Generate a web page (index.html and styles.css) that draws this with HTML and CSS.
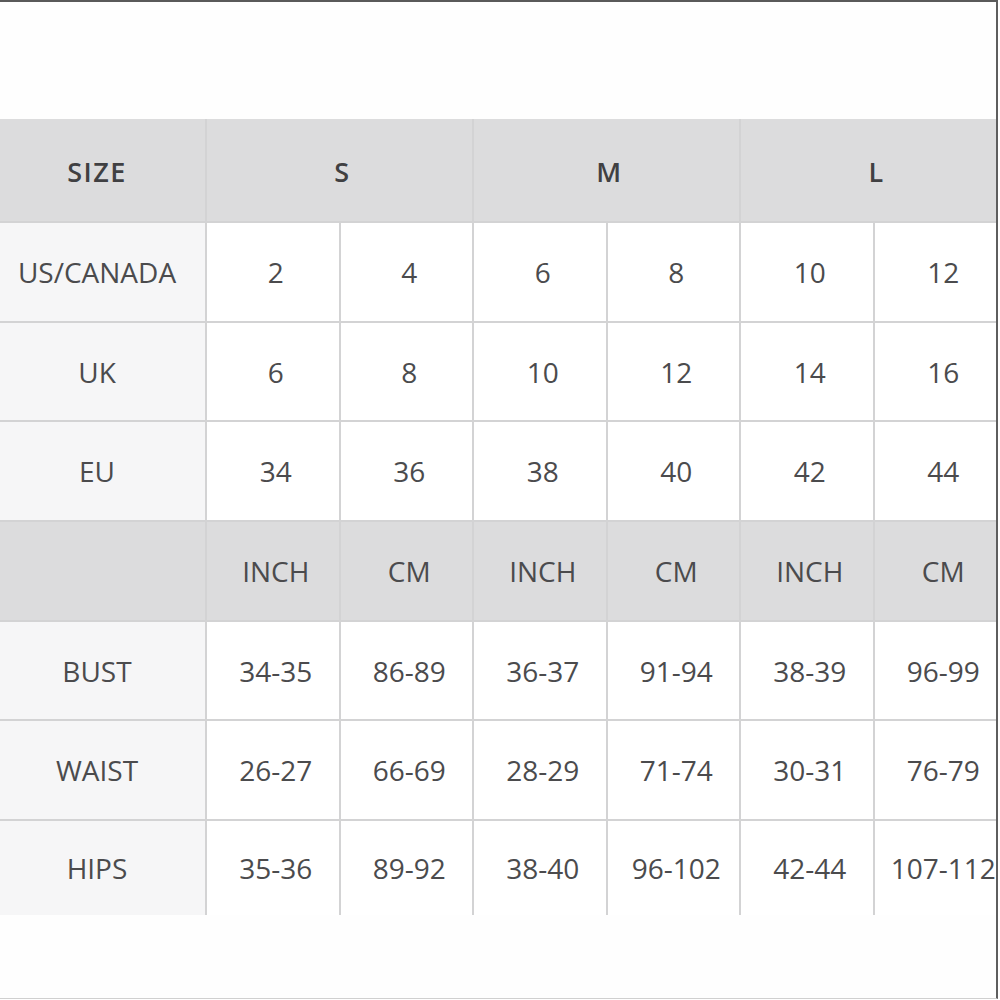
FILE: index.html
```html
<!DOCTYPE html>
<html lang="en">
<head>
<meta charset="utf-8">
<title>Size Chart</title>
<link rel="stylesheet" href="styles.css">
</head>
<body>
<div class="frame">
  <div class="clip">
    <div class="chart">
      <div class="cell head label">SIZE</div>
      <div class="cell head span2">S</div>
      <div class="cell head span2">M</div>
      <div class="cell head span2">L</div>

      <div class="cell label">US/CANADA</div>
      <div class="cell">2</div><div class="cell">4</div><div class="cell">6</div><div class="cell">8</div><div class="cell">10</div><div class="cell">12</div>

      <div class="cell label">UK</div>
      <div class="cell">6</div><div class="cell">8</div><div class="cell">10</div><div class="cell">12</div><div class="cell">14</div><div class="cell">16</div>

      <div class="cell label">EU</div>
      <div class="cell">34</div><div class="cell">36</div><div class="cell">38</div><div class="cell">40</div><div class="cell">42</div><div class="cell">44</div>

      <div class="cell unit label"></div>
      <div class="cell unit">INCH</div><div class="cell unit">CM</div><div class="cell unit">INCH</div><div class="cell unit">CM</div><div class="cell unit">INCH</div><div class="cell unit">CM</div>

      <div class="cell label">BUST</div>
      <div class="cell">34-35</div><div class="cell">86-89</div><div class="cell">36-37</div><div class="cell">91-94</div><div class="cell">38-39</div><div class="cell">96-99</div>

      <div class="cell label">WAIST</div>
      <div class="cell">26-27</div><div class="cell">66-69</div><div class="cell">28-29</div><div class="cell">71-74</div><div class="cell">30-31</div><div class="cell">76-79</div>

      <div class="cell label">HIPS</div>
      <div class="cell">35-36</div><div class="cell">89-92</div><div class="cell">38-40</div><div class="cell">96-102</div><div class="cell">42-44</div><div class="cell">107-112</div>
    </div>
  </div>
</div>
</body>
</html>
```
FILE: styles.css
```css
html, body {
  margin: 0;
  padding: 0;
  background: #ffffff;
}

.frame {
  box-sizing: border-box;
  width: 998px;
  height: 999px;
  border-top: 2px solid #5a5a5a;
  border-right: 2px solid #5e5e5e;
  border-bottom: 1px solid #d0d0d0;
  padding-top: 117px;
  background: #fefefe;
  overflow: hidden;
}

.clip {
  width: 996px;
  overflow: hidden;
}

.chart {
  display: grid;
  grid-template-columns: 205px repeat(6, 131.5px);
  grid-template-rows: 102px repeat(6, 97.7px) 94px;
  gap: 2px;
  width: max-content;
  background: #d3d3d4;
  font-family: "Open Sans", "Liberation Sans", sans-serif;
  font-size: 28px;
  color: #4b4b4d;
}

.cell {
  display: flex;
  align-items: center;
  justify-content: center;
  background: #ffffff;
  padding-left: 6px;
  white-space: nowrap;
}

.cell.label {
  background: #f6f6f7;
  padding-left: 0;
  padding-right: 11px;
}

.cell.head {
  background: #dcdcdd;
  font-weight: 600;
  font-size: 27px;
  letter-spacing: 1.5px;
  color: #404042;
  padding-top: 3px;
}

.cell.head.label {
  background: #dcdcdd;
}

.span2 {
  grid-column: span 2;
}

.cell.unit {
  background: #dcdcdd;
}
```
